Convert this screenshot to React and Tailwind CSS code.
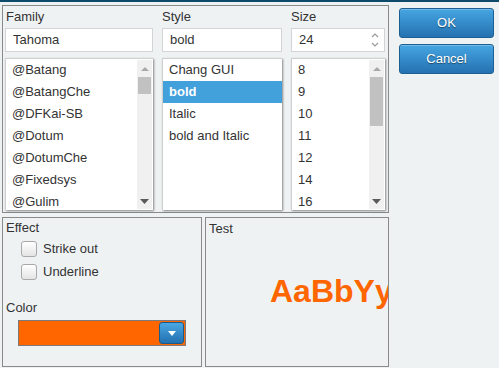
import React from 'react';

const families = ['@Batang', '@BatangChe', '@DFKai-SB', '@Dotum', '@DotumChe', '@Fixedsys', '@Gulim'];
const styles = ['Chang GUI', 'bold', 'Italic', 'bold and Italic'];
const sizes = ['8', '9', '10', '11', '12', '14', '16'];

function Scrollbar({ thumb }) {
  return (
    <div className="w-[15px] my-[1px] mr-[1px] bg-[#f0f0f0] flex flex-col">
      <div className="h-[16px] flex items-center justify-center">
        <svg width="8" height="5" viewBox="0 0 8 5">
          <path d="M0 5 L4 1 L8 5 Z" fill="#a9a9a9" />
        </svg>
      </div>
      <div className={`mt-[1px] mx-[1px] bg-[#c1c1c1] ${thumb}`} />
      <div className="flex-1" />
      <div className="h-[16px] flex items-center justify-center">
        <svg width="9" height="5" viewBox="0 0 9 5">
          <path d="M0 0 L9 0 L4.5 5 Z" fill="#5a5a5a" />
        </svg>
      </div>
    </div>
  );
}

function ListBox({ items, selected, thumb }) {
  return (
    <div className="mt-[6px] h-[152px] bg-white border-l border-t border-[#cfcfcf] shadow-[1px_1px_2px_rgba(0,0,0,0.45)] flex overflow-hidden">
      <div className="flex-1">
        {items.map((it) => (
          <div
            key={it}
            className={`h-[22px] pl-[6px] flex items-center whitespace-nowrap ${
              it === selected ? 'bg-[#42a0db] text-white font-bold' : ''
            }`}
          >
            {it}
          </div>
        ))}
      </div>
      {thumb && <Scrollbar thumb={thumb} />}
    </div>
  );
}

function Field({ children, spinner }) {
  return (
    <div className="h-[24px] bg-white border border-[#d4d4d4] pl-[7px] pr-[4px] flex items-center">
      <span className="flex-1">{children}</span>
      {spinner && (
        <svg width="10" height="16" viewBox="0 0 10 16">
          <path d="M2 5 L5 2 L8 5" fill="none" stroke="#9a9a9a" strokeWidth="1.2" />
          <path d="M2 11 L5 14 L8 11" fill="none" stroke="#9a9a9a" strokeWidth="1.2" />
        </svg>
      )}
    </div>
  );
}

function Checkbox({ label, className = '' }) {
  return (
    <div className={`h-[22px] pl-[15px] flex items-center gap-[6px] ${className}`}>
      <div className="w-[16px] h-[16px] rounded-[3px] border border-[#a9a9a9] bg-linear-to-b from-white to-[#e4e4e4]" />
      <span>{label}</span>
    </div>
  );
}

function BlueButton({ children }) {
  return (
    <button className="h-[30px] w-[95px] rounded-[3px] border border-[#1d5f93] bg-linear-to-b from-[#46a6e2] to-[#2571b1] text-white text-[13px] [text-shadow:0_1px_1px_rgba(0,0,0,0.45)] shadow-[inset_0_1px_0_rgba(255,255,255,0.25)]">
      {children}
    </button>
  );
}

export default function App() {
  return (
    <div className="w-[499px] h-[368px] overflow-hidden bg-[#eff2f3] text-[13px] text-[#333] font-['Liberation_Sans',Arial,sans-serif]">
      <div className="h-[2px] bg-[#0e4a6a]" />
      <div className="flex">
        <div className="ml-[2px] w-[387px]">
          {/* font selection frame */}
          <div className="mt-[3px] h-[208px] border border-[#8a8a8a] pl-[2px] flex gap-[9px]">
            <div className="w-[148px]">
              <div className="h-[22px] pl-[1px] flex items-center">Family</div>
              <Field>Tahoma</Field>
              <ListBox items={families} thumb="h-[17px]" />
            </div>
            <div className="w-[120px]">
              <div className="h-[22px] flex items-center">Style</div>
              <Field>bold</Field>
              <ListBox items={styles} selected="bold" />
            </div>
            <div className="w-[94px]">
              <div className="h-[22px] flex items-center">Size</div>
              <Field spinner>24</Field>
              <ListBox items={sizes} thumb="h-[49px]" />
            </div>
          </div>

          <div className="mt-[4px] flex gap-[3px]">
            {/* effect panel */}
            <div className="w-[200px] h-[150px] border border-[#8a8a8a] pl-[3px]">
              <div className="h-[20px] flex items-center">Effect</div>
              <Checkbox label="Strike out" />
              <Checkbox label="Underline" className="mt-[1px]" />
              <div className="mt-[15px] h-[20px] flex items-center">Color</div>
              <div className="mt-[2px] ml-[12px] w-[168px] h-[26px] border border-[#7a7a7a] bg-[#ff6600] flex justify-end items-start pt-[1px] pr-[1px]">
                <div className="w-[25px] h-[22px] rounded-[3px] border border-[#1b5b8c] bg-linear-to-b from-[#4aa7e2] to-[#2270b0] flex items-center justify-center">
                  <svg width="8" height="5" viewBox="0 0 8 5">
                    <path d="M0 0 L8 0 L4 5 Z" fill="#ffffff" />
                  </svg>
                </div>
              </div>
            </div>
            {/* test panel */}
            <div className="w-[184px] h-[150px] border border-[#8a8a8a] overflow-hidden">
              <div className="h-[22px] pl-[3px] flex items-center">Test</div>
              <div className="mt-[35px] pl-[64px] h-[32px] leading-[32px] text-[32px] font-bold text-[#ff6600] whitespace-nowrap">
                AaBbYy
              </div>
            </div>
          </div>
        </div>

        <div className="ml-[10px] mt-[6px] flex flex-col gap-[6px]">
          <BlueButton>OK</BlueButton>
          <BlueButton>Cancel</BlueButton>
        </div>
      </div>
    </div>
  );
}
